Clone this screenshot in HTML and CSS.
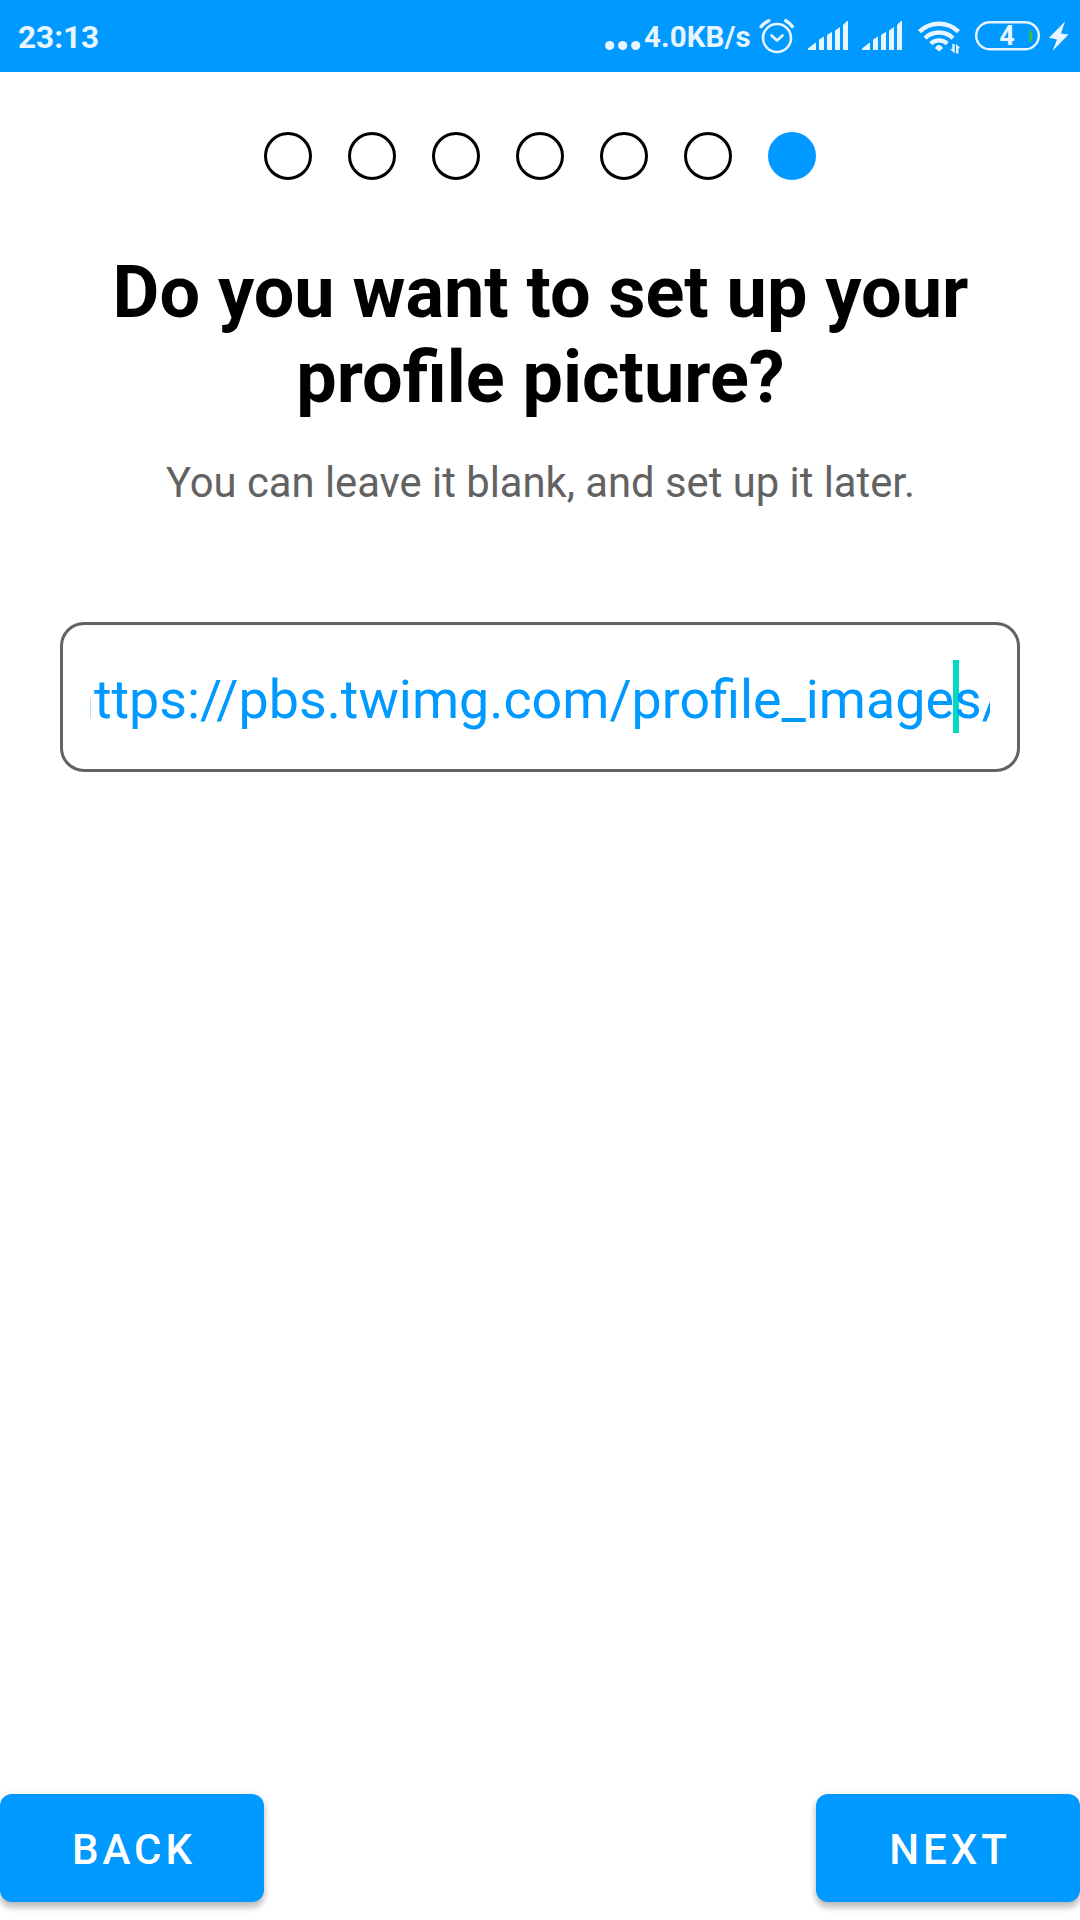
FILE: index.html
```html
<!DOCTYPE html>
<html lang="en">
<head>
<meta charset="utf-8">
<title>Profile picture</title>
<link rel="stylesheet" href="styles.css">
</head>
<body>
<div class="screen">
  <header class="status">
    <span class="time">23:13</span>
    <svg class="dots" width="36" height="72" viewBox="0 0 36 72"><circle cx="4.7" cy="45.5" r="4.6"/><circle cx="17.7" cy="45.5" r="4.6"/><circle cx="30.7" cy="45.5" r="4.6"/></svg>
    <span class="speed">4.0KB/s</span>
    <svg class="alarm" width="36" height="72" viewBox="0 0 36 72"><g fill="none" stroke="#e6f5ff" stroke-linecap="round"><circle cx="18" cy="38" r="14" stroke-width="2.6"/><path d="M12.5 35.5l5.5 5 5.5-5" stroke-width="2.7" stroke-linejoin="round"/><path d="M2.2 26.6a20 20 0 0 1 7.5-5.9M26.8 20.7a20 20 0 0 1 6.5 5.9" stroke-width="3.4"/></g></svg>
    <svg class="signal" width="41" height="72" viewBox="0 0 41 72"><path d="M0 50v-1.5L7 43h1v7zM11 50V39.500l5-3V50zM19 50V35l5-3.200V50zM27 50V30.500l5-3.500V50zM35 50V25l4-4h1v29z"/></svg>
    <svg class="signal second" width="41" height="72" viewBox="0 0 41 72"><path d="M0 50v-1.500L7 43h1v7zM11 50V39.500l5-3V50zM19 50V35l5-3.200V50zM27 50V30.500l5-3.500V50zM35 50V25l4-4h1v29z"/></svg>
    <svg class="wifi" width="44" height="72" viewBox="0 0 44 72"><g fill="none" stroke="#e6f5ff" stroke-width="4.400"><path d="M1.500 31.700a28 28 0 0 1 39 0M7 38.200a20 20 0 0 1 28 0M12.700 43.700a12 12 0 0 1 16.600 0"/></g><path d="M17 48.300Q18.500 45 21 45t4 3.300L21 51.500zM34.300 44h2.400v9.500L32 49h2.300zM38 53.500V44l4.500 4.300h-2.100v5.200z"/></svg>
    <span class="battery"><svg class="cell" width="66" height="30" viewBox="0 0 66 30"><rect x="1.200" y="1.200" width="62.600" height="27" rx="13.500" fill="none" stroke="#e6f5ff" stroke-width="2.400"/><path fill="#3cc42c" d="M54.500 8.500c4 2 4 11 0 13z"/></svg><span class="level">4</span></span>
    <svg class="bolt" width="20" height="72" viewBox="0 0 20 72"><path d="M16 21.500L0 37.800l8 1.700L3.500 51 19.500 34.500l-7.500-1z"/></svg>
  </header>
  <main class="content">
    <div class="steps"><i></i><i></i><i></i><i></i><i></i><i></i><i class="active"></i></div>
    <h1>Do you want to set up your profile picture?</h1>
    <p>You can leave it blank, and set up it later.</p>
    <div class="field"><div class="value"><span class="url">https://pbs.twimg.com/profile_images/</span><span class="caret"></span></div></div>
  </main>
  <footer class="actions">
    <button>BACK</button>
    <button>NEXT</button>
  </footer>
</div>
</body>
</html>
```
FILE: styles.css
```css
* { box-sizing: border-box; }
body { margin: 0; background: #fff; font-family: Roboto, sans-serif; }
.screen { display: flex; flex-direction: column; width: 1080px; height: 1920px; overflow: hidden; }
.status { display: flex; height: 72px; flex: none; background: #0099ff; color: #e6f5ff; fill: #e6f5ff; font-size: 31.500px; font-weight: 700; line-height: 75px; }
.status svg { flex: none; }
.time { width: 587px; padding-left: 18px; }
.status .dots { margin-right: 3px; margin-left: 18px; }
.speed { width: 115px; font-size: 29.500px; letter-spacing: 0.1px; white-space: nowrap; }
.signal { margin-left: 13px; }
.signal.second { margin-left: 13px; }
.wifi { margin-left: 15px; }
.battery { position: relative; width: 66px; margin: 21px 0 0 13px; height: 30px; }
.battery svg { display: block; }
.level { position: absolute; inset: 0 2px 0 0; text-align: center; font-size: 27px; font-weight: 700; line-height: 30px; }
.bolt { margin-left: 8px; }
.content { flex: 1; padding: 60px 60px 0; text-align: center; }
.steps { display: flex; justify-content: center; gap: 36px; }
.steps i { width: 48px; height: 48px; border: 3px solid #000; border-radius: 50%; }
.steps .active { border-color: #0099ff; background: #0099ff; }
h1 { margin: 70px 0 0; padding-left: 1px; font-size: 72px; font-weight: 700; line-height: 85px; }
p { margin: 38px 0 0; padding-left: 1px; font-size: 41.750px; line-height: 50px; color: #626262; }
.field { height: 150px; margin-top: 114px; padding: 0 27px; border: 3px solid #626262; border-radius: 24px; }
.value { position: relative; height: 144px; overflow: hidden; text-align: left; }
.url { position: relative; z-index: 1; display: block; margin-left: -25.700px; font-size: 53.780px; line-height: 149px; color: #0099ff; white-space: nowrap; }
.caret { position: absolute; left: 863px; top: 35px; width: 6px; height: 73px; background: #03dac5; }
.actions { display: flex; justify-content: space-between; padding-bottom: 18px; }
button { width: 264px; height: 108px; padding: 3px 0 0 4px; border: 0; border-radius: 12px; background: #0099ff; color: #fff; font: 500 42px Roboto, sans-serif; letter-spacing: 4px; box-shadow: 0 6px 6px rgba(0,0,0,.2), 0 2px 8px rgba(0,0,0,.12); }
```
